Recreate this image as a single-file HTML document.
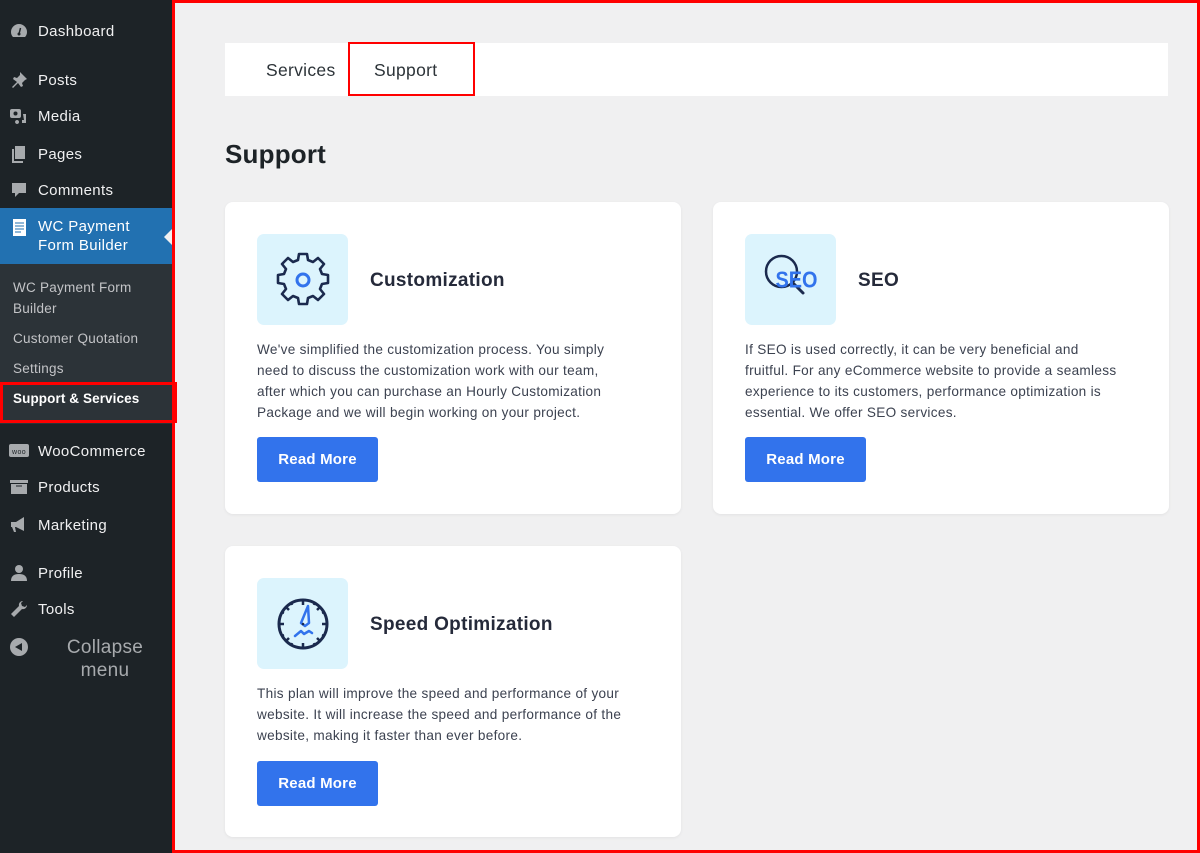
<!DOCTYPE html>
<html><head><meta charset="utf-8"><style>
*{margin:0;padding:0;box-sizing:border-box}
body{width:1200px;height:853px;overflow:hidden;background:#f0f0f1;font-family:"Liberation Sans",sans-serif;position:relative}
#sb{position:absolute;left:0;top:0;width:172px;height:853px;background:#1d2327}
.mi{position:absolute;left:0;width:172px;color:#f0f0f1;font-size:15px;letter-spacing:.35px;display:flex;align-items:center}
.mi .ic{width:38px;display:flex;justify-content:center;margin-left:0;color:#a7aaad}
#sub{position:absolute;left:0;top:264px;width:172px;height:160px;background:#2c3338}
.si{position:absolute;left:13px;color:#c3c4c7;font-size:13.5px;letter-spacing:.25px;line-height:21px}
#main{position:absolute;left:172px;top:0;width:1028px;height:853px;border:3px solid #f00}
.tabs{position:absolute;left:225px;top:43px;width:943px;height:53px;background:#fff}
.tab{position:absolute;top:60px;font-size:17.5px;letter-spacing:.3px;color:#2c3338}
h1{position:absolute;left:225px;top:139px;font-size:26px;font-weight:bold;color:#1d2327;letter-spacing:.2px}
.card{position:absolute;background:#fff;border-radius:8px;width:456px;box-shadow:0 1px 3px rgba(0,0,0,.06)}
.ib{position:absolute;left:32px;top:32px;width:91px;height:91px;background:#dcf4fd;border-radius:7px;display:flex;align-items:center;justify-content:center}
.ct{position:absolute;left:145px;top:68px;font-size:19px;font-weight:bold;color:#252a3a;letter-spacing:.3px}
.cp{position:absolute;left:32px;top:137px;width:372px;font-size:13.6px;letter-spacing:.3px;line-height:21px;color:#3c4250}
.btn{position:absolute;left:32px;width:121px;height:45px;background:#3273ec;color:#fff;border-radius:3px;font-size:15px;font-weight:bold;letter-spacing:.2px;display:flex;align-items:center;justify-content:center}
</style></head><body>
<div id="sb">
<div class="mi" style="top:20px;height:22px"><span class="ic"><svg width="20" height="20" viewBox="0 0 20 20"><path d="M10 3a8 8 0 0 0-8 8c0 2 .7 3.7 2 5h12c1.3-1.3 2-3 2-5a8 8 0 0 0-8-8z" fill="#a7aaad"/><path d="M10 13l1.5-6" stroke="#1d2327" stroke-width="1.5"/><circle cx="10" cy="13" r="1.5" fill="#1d2327"/></svg></span><span>Dashboard</span></div>
<div class="mi" style="top:69px;height:22px"><span class="ic"><svg width="20" height="20" viewBox="0 0 20 20"><path d="M11 2l7 7-2 1-3 3 1 3-2 1-3-4-5 5-1-1 5-5-4-3 1-2 3 1 3-3z" fill="#a7aaad"/></svg></span><span>Posts</span></div>
<div class="mi" style="top:105px;height:22px"><span class="ic"><svg width="20" height="20" viewBox="0 0 20 20"><rect x="1" y="3" width="11" height="9" rx="2" fill="#a7aaad"/><circle cx="6.5" cy="7.5" r="2" fill="#1d2327"/><path d="M14 8h3v9h-4v-3h2z M8 14a2 2 0 1 0 .1 0z" fill="#a7aaad"/></svg></span><span>Media</span></div>
<div class="mi" style="top:143px;height:22px"><span class="ic"><svg width="20" height="20" viewBox="0 0 20 20"><path d="M6 2h10v13H6z M3 5h2v12h9v2H3z" fill="#a7aaad"/></svg></span><span>Pages</span></div>
<div class="mi" style="top:179px;height:22px"><span class="ic"><svg width="20" height="20" viewBox="0 0 20 20"><path d="M3 3h14v10h-7l-4 4v-4H3z" fill="#a7aaad"/></svg></span><span>Comments</span></div>
<div style="position:absolute;top:208px;left:0;width:172px;height:56px;background:#2271b1"></div>
<div style="position:absolute;top:229px;left:164px;width:0;height:0;border-top:8px solid transparent;border-bottom:8px solid transparent;border-right:8px solid #f0f0f1"></div>
<div class="mi" style="top:217px;height:40px;align-items:flex-start"><span class="ic" style="padding-top:1px"><svg width="20" height="20" viewBox="0 0 20 20"><rect x="4" y="1" width="13" height="17" fill="#fff"/><path d="M6 5h9M6 8h9M6 11h9M6 14h6" stroke="#2271b1" stroke-width="1"/></svg></span><span style="line-height:19px;color:#fff">WC Payment<br>Form Builder</span></div>
<div id="sub"></div>
<div class="si" style="top:277px">WC Payment Form<br>Builder</div>
<div class="si" style="top:328px">Customer Quotation</div>
<div class="si" style="top:358px">Settings</div>
<div class="si" style="top:388px;color:#fff;font-weight:bold;letter-spacing:.1px">Support &amp; Services</div>
<div style="position:absolute;left:0;top:382px;width:177px;height:41px;border:3px solid #f00"></div>
<div class="mi" style="top:440px;height:22px"><span class="ic"><svg width="22" height="20" viewBox="0 0 22 20"><rect x="1" y="3" width="20" height="13" rx="2" fill="#a7aaad"/><text x="11" y="13" font-size="7" text-anchor="middle" fill="#1d2327" font-family="Liberation Sans">woo</text></svg></span><span>WooCommerce</span></div>
<div class="mi" style="top:476px;height:22px"><span class="ic"><svg width="20" height="20" viewBox="0 0 20 20"><path d="M1 3h18v3H1z M2 7h16v10H2z" fill="#a7aaad"/><path d="M7 9h6" stroke="#1d2327"/></svg></span><span>Products</span></div>
<div class="mi" style="top:514px;height:22px"><span class="ic"><svg width="20" height="20" viewBox="0 0 20 20"><path d="M2 7h5l8-5v14l-8-4H6l1 5H5l-2-5H2z" fill="#a7aaad"/></svg></span><span>Marketing</span></div>
<div class="mi" style="top:562px;height:22px"><span class="ic"><svg width="20" height="20" viewBox="0 0 20 20"><circle cx="10" cy="6" r="4" fill="#a7aaad"/><path d="M2 18c0-5 3-7 8-7s8 2 8 7z" fill="#a7aaad"/></svg></span><span>Profile</span></div>
<div class="mi" style="top:598px;height:22px"><span class="ic"><svg width="20" height="20" viewBox="0 0 20 20"><path d="M14 2a4 4 0 0 0-4 5L2 15l3 3 8-8a4 4 0 0 0 5-4l-2 2-3-1-1-3z" fill="#a7aaad"/></svg></span><span>Tools</span></div>
<div style="position:absolute;left:10px;top:638px"><svg width="18" height="18" viewBox="0 0 18 18"><circle cx="9" cy="9" r="9" fill="#a7aaad"/><path d="M5 9l7-4v8z" fill="#1d2327"/></svg></div>
<div style="position:absolute;left:38px;top:636px;width:134px;text-align:center;color:#a7aaad;font-size:19px;letter-spacing:.3px;line-height:23px">Collapse<br>menu</div>
</div>
<div id="main"></div>
<div class="tabs"></div>
<div class="tab" style="left:266px">Services</div>
<div class="tab" style="left:374px">Support</div>
<div style="position:absolute;left:348px;top:42px;width:127px;height:54px;border:2px solid #f00"></div>
<h1>Support</h1>

<div class="card" style="left:225px;top:202px;height:312px">
<div class="ib"><svg width="64" height="64" viewBox="0 0 64 64"><path d="M28 6h8l1 6 5 2 5-4 6 6-4 5 2 5 6 1v8l-6 1-2 5 4 5-6 6-5-4-5 2-1 6h-8l-1-6-5-2-5 4-6-6 4-5-2-5-6-1v-8l6-1 2-5-4-5 6-6 5 4 5-2z" fill="none" stroke="#1b2a4e" stroke-width="2.6" stroke-linejoin="round"/><circle cx="32" cy="32" r="6" fill="none" stroke="#3273ec" stroke-width="3"/></svg></div>
<div class="ct">Customization</div>
<div class="cp">We've simplified the customization process. You simply need to discuss the customization work with our team, after which you can purchase an Hourly Customization Package and we will begin working on your project.</div>
<div class="btn" style="top:235px">Read More</div>
</div>

<div class="card" style="left:713px;top:202px;height:312px">
<div class="ib"><svg width="64" height="64" viewBox="0 0 64 64"><circle cx="22.5" cy="23.5" r="15.5" fill="none" stroke="#1b2a4e" stroke-width="2.5"/><path d="M34 35l10 10" stroke="#1b2a4e" stroke-width="3" stroke-linecap="round"/><text x="16.5" y="39.5" font-size="23" font-weight="bold" fill="#3273ec" font-family="Liberation Sans" textLength="42" lengthAdjust="spacingAndGlyphs">SEO</text></svg></div>
<div class="ct">SEO</div>
<div class="cp">If SEO is used correctly, it can be very beneficial and fruitful. For any eCommerce website to provide a seamless experience to its customers, performance optimization is essential. We offer SEO services.</div>
<div class="btn" style="top:235px">Read More</div>
</div>

<div class="card" style="left:225px;top:546px;height:291px">
<div class="ib"><svg width="64" height="64" viewBox="0 0 64 64"><circle cx="32" cy="32" r="24" fill="none" stroke="#1b2a4e" stroke-width="3"/><g stroke="#1b2a4e" stroke-width="2.5"><path d="M32 8v5M32 51v5M8 32h5M51 32h5M15 15l3 3M46 46l3 3M49 15l-3 3M15 49l3-3M20 10l1 3M44 10l-1 3M10 20l3 1M54 20l-3 1M10 44l3-1M54 44l-3-1M20 54l1-3M44 54l-1-3"/></g><path d="M37 14l-7 17 4 3 4-3z" fill="none" stroke="#3273ec" stroke-width="2.5" stroke-linejoin="round"/><circle cx="32" cy="32" r="1.3" fill="#1b2a4e"/><path d="M24 44l6-5 3 3 5-3 3 2" fill="none" stroke="#3273ec" stroke-width="2.5" stroke-linecap="round" stroke-linejoin="round"/></svg></div>
<div class="ct">Speed Optimization</div>
<div class="cp">This plan will improve the speed and performance of your website. It will increase the speed and performance of the website, making it faster than ever before.</div>
<div class="btn" style="top:215px">Read More</div>
</div>
</body></html>
